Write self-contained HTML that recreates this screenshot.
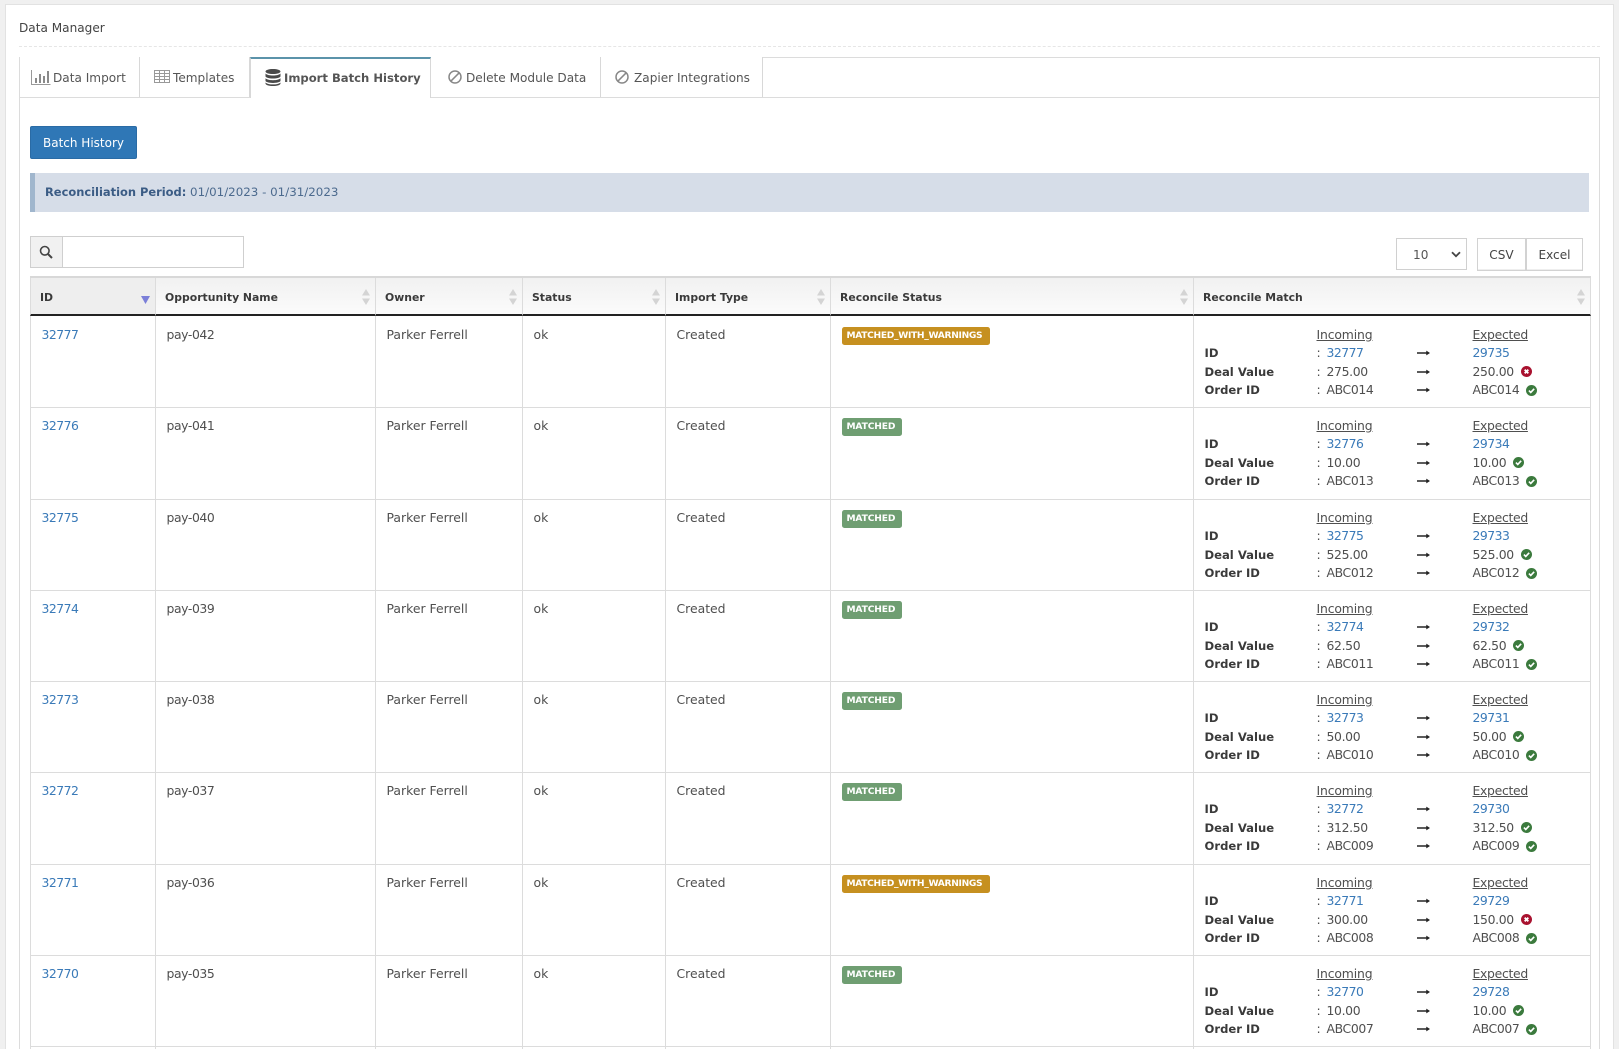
<!DOCTYPE html>
<html><head><meta charset="utf-8"><title>Data Manager</title>
<style>
*{box-sizing:border-box}
html,body{margin:0;padding:0;width:1619px;height:1049px;overflow:hidden;background:#f0f0f0}
body{font-family:"DejaVu Sans","Liberation Sans",sans-serif;font-size:12.4px;color:#4f4f4f;position:relative}
.panel{position:absolute;left:5px;top:4px;width:1609px;height:1100px;background:#fff;border:1px solid #e2e2e2}
.abs{position:absolute}
h1{position:absolute;left:19px;top:20px;margin:0;font-weight:400;font-size:12.1px;line-height:16px;color:#444;white-space:nowrap}
.dash{position:absolute;left:19px;top:46px;width:1581px;border-top:1px dashed #e6e6e6}
.box{position:absolute;left:19px;top:57px;width:1581px;height:1100px;border:1px solid #dcdcdc}
.tabline{position:absolute;left:19px;top:97px;width:1581px;border-top:1px solid #dcdcdc}
.tab{position:absolute;top:57px;height:40px;border-right:1px solid #d8d8d8;background:#fff;line-height:42px;white-space:nowrap;font-size:12.1px;color:#555}
.tab svg{position:absolute}
.tab span{position:absolute;top:0}
.tab.on{border-top:2px solid #5b93aa;border-left:1px solid #d8d8d8;border-bottom:0;height:41px;line-height:38px;font-weight:700;font-size:11.6px;color:#555}
.btn{position:absolute;left:30px;top:126px;width:107px;height:33px;background:#2f77b6;border:1px solid #2a6ba5;border-radius:2px;color:#fff;text-align:center;line-height:32.5px;font-size:12px}
.alert{position:absolute;left:30px;top:173px;width:1559px;height:39px;background:#d6dde8;border-left:5px solid #a0b6cd;line-height:39px;padding-left:10px;color:#4c6a8e;font-size:11.85px;white-space:nowrap}
.alert b{color:#3b5c85;font-size:11.45px}
.search{position:absolute;left:30px;top:236px;width:214px;height:32px;border:1px solid #cfcfcf;background:#fff}
.search i{position:absolute;left:0;top:0;width:32px;height:30px;background:#f1f1f1;border-right:1px solid #cfcfcf}
.select{position:absolute;left:1396px;top:238px;width:71px;height:32px;border:1px solid #d0d0d0;background:#fff;line-height:32px;padding-left:16px;font-size:12.1px;color:#555}
.tbtn{position:absolute;top:238px;height:33px;border:1px solid #d2d2d2;background:#fff;text-align:center;line-height:33px;font-size:12.1px;color:#444;box-shadow:inset 0 -1px 0 #eee}
table{position:absolute;left:30px;top:276px;width:1561px;border-collapse:separate;border-spacing:0;table-layout:fixed;border-top:2px solid #d8d8d8}
th{height:38px;padding:4px 0 0 9px;text-align:left;font-size:10.85px;font-weight:700;color:#3a3a3a;background:linear-gradient(#f1f1f1,#fbfbfb);border-left:1px solid #dcdcdc;border-bottom:2px solid #222;position:relative;line-height:32px;white-space:nowrap}
th.s{background:#eeeeee}
th svg{position:absolute;right:5px;top:11px}
td{padding:9px 0 0 10.5px;vertical-align:top;border-left:1px solid #dcdcdc;border-bottom:1px solid #dcdcdc;line-height:18px;white-space:nowrap;overflow:hidden}
.first td{padding-top:10px}
.h92 td{height:92px}
.h91 td{height:91px}
td:nth-child(2){letter-spacing:-.4px}
td:last-child,th:last-child{border-right:1px solid #dcdcdc}
a{color:#3a7ab8;text-decoration:none;letter-spacing:-.5px}
.badge{display:inline-block;height:18px;border-radius:2.5px;padding:0 5px;color:#fff;font-weight:700;font-size:9.15px;line-height:18px;margin-top:1px;vertical-align:top}
.w{background:#c69020;width:148px;letter-spacing:-.33px}
.g{background:#6f9e72;width:60px;letter-spacing:-.15px}
.m{display:grid;grid-template-columns:112px 10px 90px 56px 1fr;grid-auto-rows:18.4px;line-height:18.4px;margin-top:0}
.m b{color:#3a3a3a;font-size:11.6px}
.m u{letter-spacing:-.3px}
.m u.i{grid-column:2/4;letter-spacing:-.15px}
.m svg.ar{margin-top:5px;display:block}
.m svg.ic{margin-left:7px;vertical-align:-1.5px}
.n{letter-spacing:-.35px}
</style></head><body>
<svg width="0" height="0" style="position:absolute">
<defs>
<symbol id="ok" viewBox="0 0 12 12"><circle cx="6" cy="6" r="6" fill="#3b7a3d"/><path d="M3.2 6.1 5.2 8.1 8.9 4.2" fill="none" stroke="#fff" stroke-width="1.8"/></symbol>
<symbol id="no" viewBox="0 0 12 12"><circle cx="6" cy="6" r="6" fill="#a9122f"/><path d="M4 4 8 8M8 4 4 8" fill="none" stroke="#fff" stroke-width="2"/></symbol>
<symbol id="ar" viewBox="0 0 14 8"><path d="M0 3.2H10.500V4.800H0Z" fill="#222"/><path d="M10 1.500 14 4 10 6.500Z" fill="#222"/></symbol>
<symbol id="so" viewBox="0 0 10 16"><path d="M5 0 9 6.500H1ZM5 16 1 9.500H9Z" fill="#d4d4d4"/></symbol>
</defs>
</svg>
<div class="panel"></div>
<h1>Data Manager</h1>
<div class="dash"></div>
<div class="box"></div>
<div class="tabline"></div>

<div class="tab" style="left:20px;width:120px">
<svg width="20" height="16" viewBox="0 0 20 16" style="left:11px;top:12px"><path d="M.5 1V15.500H19.500" fill="none" stroke="#999" stroke-width="1"/><path d="M4 9H6V14H4ZM8 5H10V14H8ZM12 7H14V14H12ZM16 2H18V14H16Z" fill="#8a8a8a"/></svg>
<span style="left:33px">Data Import</span></div>
<div class="tab" style="left:140px;width:110px">
<svg width="16" height="13" viewBox="0 0 16 13" style="left:14px;top:13px"><path d="M.5.500H15.500V12.500H.5ZM.5 3.500H15.500M.5 6.500H15.500M.5 9.500H15.500M5.500.500V12.500M10.500.500V12.500" fill="none" stroke="#999"/></svg>
<span style="left:33px">Templates</span></div>
<div class="tab on" style="left:250px;width:181px">
<svg width="16" height="17" viewBox="0 0 16 17" style="left:14px;top:10px"><path d="M8 0C12 0 15.500 1 15.500 2.500S12 5 8 5 .5 4 .5 2.500 4 0 8 0ZM.5 4.500C2 6 5 6.500 8 6.500S14 6 15.500 4.500V7.200C15.500 8.500 12 9.500 8 9.500S.5 8.500.5 7.200ZM.5 9.300C2 10.800 5 11.200 8 11.200S14 10.800 15.500 9.300V11.800C15.500 13 12 14 8 14S.5 13 .5 11.800ZM.5 13.500C2 15 5 15.400 8 15.400S14 15 15.500 13.500V14.500C15.500 16 12 17 8 17S.5 16 .5 14.500Z" fill="#4a4a4a"/></svg>
<span style="left:33px">Import Batch History</span></div>
<div class="tab" style="left:431px;width:170px">
<svg width="14" height="14" viewBox="0 0 14 14" style="left:17px;top:13px"><circle cx="7" cy="7" r="6" fill="none" stroke="#888" stroke-width="1.500"/><path d="M2.800 11.200 11.200 2.800" stroke="#888" stroke-width="1.500"/></svg>
<span style="left:35px">Delete Module Data</span></div>
<div class="tab" style="left:601px;width:162px">
<svg width="14" height="14" viewBox="0 0 14 14" style="left:14px;top:13px"><circle cx="7" cy="7" r="6" fill="none" stroke="#888" stroke-width="1.500"/><path d="M2.800 11.200 11.200 2.800" stroke="#888" stroke-width="1.500"/></svg>
<span style="left:33px">Zapier Integrations</span></div>

<div class="btn">Batch History</div>
<div class="alert"><b>Reconciliation Period:</b> 01/01/2023 - 01/31/2023</div>
<div class="search"><i><svg width="14" height="14" viewBox="0 0 14 14" style="position:absolute;left:8px;top:8px"><circle cx="5.800" cy="5.800" r="4.300" fill="none" stroke="#444" stroke-width="1.600"/><path d="M9 9 13 13" stroke="#444" stroke-width="2"/></svg></i></div>
<div class="select">10<svg width="10" height="7" viewBox="0 0 10 7" style="position:absolute;right:5px;top:12px"><path d="M1 1.200 5 5.200 9 1.200" fill="none" stroke="#444" stroke-width="1.800"/></svg></div>
<div class="tbtn" style="left:1477px;width:49px">CSV</div>
<div class="tbtn" style="left:1526px;width:57px">Excel</div>

<table>
<colgroup><col style="width:125px"><col style="width:220px"><col style="width:147px"><col style="width:143px"><col style="width:165px"><col style="width:363px"><col></colgroup>
<thead><tr>
<th class="s">ID<svg width="9" height="8" viewBox="0 0 9 8" style="right:5px;top:18px"><path d="M0 0H9L4.500 8Z" fill="#7b7fd8"/></svg></th>
<th>Opportunity Name<svg width="10" height="16" style="right:4px"><use href="#so"/></svg></th>
<th>Owner<svg width="10" height="16" style="right:4px"><use href="#so"/></svg></th>
<th>Status<svg width="10" height="16" style="right:4px"><use href="#so"/></svg></th>
<th>Import Type<svg width="10" height="16" style="right:4px"><use href="#so"/></svg></th>
<th>Reconcile Status<svg width="10" height="16" style="right:4px"><use href="#so"/></svg></th>
<th>Reconcile Match<svg width="10" height="16" style="right:4px"><use href="#so"/></svg></th>
</tr></thead>
<tbody>
<tr class="h92 first"><td><a href="#">32777</a></td><td>pay-042</td><td>Parker Ferrell</td><td>ok</td><td>Created</td><td><span class="badge w">MATCHED_WITH_WARNINGS</span></td><td><div class="m"><span></span><u class="i">Incoming</u><span></span><u>Expected</u><b>ID</b><span>:</span><a href="#">32777</a><svg class="ar" width="13" height="8"><use href="#ar"/></svg><a href="#">29735</a><b>Deal Value</b><span>:</span><span class="n">275.00</span><svg class="ar" width="13" height="8"><use href="#ar"/></svg><span class="n">250.00<svg class="ic" width="11" height="11"><use href="#no"/></svg></span><b>Order ID</b><span>:</span><span class="n">ABC014</span><svg class="ar" width="13" height="8"><use href="#ar"/></svg><span class="n">ABC014<svg class="ic" width="11" height="11"><use href="#ok"/></svg></span></div></td></tr>
<tr class="h92"><td><a href="#">32776</a></td><td>pay-041</td><td>Parker Ferrell</td><td>ok</td><td>Created</td><td><span class="badge g">MATCHED</span></td><td><div class="m"><span></span><u class="i">Incoming</u><span></span><u>Expected</u><b>ID</b><span>:</span><a href="#">32776</a><svg class="ar" width="13" height="8"><use href="#ar"/></svg><a href="#">29734</a><b>Deal Value</b><span>:</span><span class="n">10.00</span><svg class="ar" width="13" height="8"><use href="#ar"/></svg><span class="n">10.00<svg class="ic" width="11" height="11"><use href="#ok"/></svg></span><b>Order ID</b><span>:</span><span class="n">ABC013</span><svg class="ar" width="13" height="8"><use href="#ar"/></svg><span class="n">ABC013<svg class="ic" width="11" height="11"><use href="#ok"/></svg></span></div></td></tr>
<tr class="h91"><td><a href="#">32775</a></td><td>pay-040</td><td>Parker Ferrell</td><td>ok</td><td>Created</td><td><span class="badge g">MATCHED</span></td><td><div class="m"><span></span><u class="i">Incoming</u><span></span><u>Expected</u><b>ID</b><span>:</span><a href="#">32775</a><svg class="ar" width="13" height="8"><use href="#ar"/></svg><a href="#">29733</a><b>Deal Value</b><span>:</span><span class="n">525.00</span><svg class="ar" width="13" height="8"><use href="#ar"/></svg><span class="n">525.00<svg class="ic" width="11" height="11"><use href="#ok"/></svg></span><b>Order ID</b><span>:</span><span class="n">ABC012</span><svg class="ar" width="13" height="8"><use href="#ar"/></svg><span class="n">ABC012<svg class="ic" width="11" height="11"><use href="#ok"/></svg></span></div></td></tr>
<tr class="h91"><td><a href="#">32774</a></td><td>pay-039</td><td>Parker Ferrell</td><td>ok</td><td>Created</td><td><span class="badge g">MATCHED</span></td><td><div class="m"><span></span><u class="i">Incoming</u><span></span><u>Expected</u><b>ID</b><span>:</span><a href="#">32774</a><svg class="ar" width="13" height="8"><use href="#ar"/></svg><a href="#">29732</a><b>Deal Value</b><span>:</span><span class="n">62.50</span><svg class="ar" width="13" height="8"><use href="#ar"/></svg><span class="n">62.50<svg class="ic" width="11" height="11"><use href="#ok"/></svg></span><b>Order ID</b><span>:</span><span class="n">ABC011</span><svg class="ar" width="13" height="8"><use href="#ar"/></svg><span class="n">ABC011<svg class="ic" width="11" height="11"><use href="#ok"/></svg></span></div></td></tr>
<tr class="h91"><td><a href="#">32773</a></td><td>pay-038</td><td>Parker Ferrell</td><td>ok</td><td>Created</td><td><span class="badge g">MATCHED</span></td><td><div class="m"><span></span><u class="i">Incoming</u><span></span><u>Expected</u><b>ID</b><span>:</span><a href="#">32773</a><svg class="ar" width="13" height="8"><use href="#ar"/></svg><a href="#">29731</a><b>Deal Value</b><span>:</span><span class="n">50.00</span><svg class="ar" width="13" height="8"><use href="#ar"/></svg><span class="n">50.00<svg class="ic" width="11" height="11"><use href="#ok"/></svg></span><b>Order ID</b><span>:</span><span class="n">ABC010</span><svg class="ar" width="13" height="8"><use href="#ar"/></svg><span class="n">ABC010<svg class="ic" width="11" height="11"><use href="#ok"/></svg></span></div></td></tr>
<tr class="h92"><td><a href="#">32772</a></td><td>pay-037</td><td>Parker Ferrell</td><td>ok</td><td>Created</td><td><span class="badge g">MATCHED</span></td><td><div class="m"><span></span><u class="i">Incoming</u><span></span><u>Expected</u><b>ID</b><span>:</span><a href="#">32772</a><svg class="ar" width="13" height="8"><use href="#ar"/></svg><a href="#">29730</a><b>Deal Value</b><span>:</span><span class="n">312.50</span><svg class="ar" width="13" height="8"><use href="#ar"/></svg><span class="n">312.50<svg class="ic" width="11" height="11"><use href="#ok"/></svg></span><b>Order ID</b><span>:</span><span class="n">ABC009</span><svg class="ar" width="13" height="8"><use href="#ar"/></svg><span class="n">ABC009<svg class="ic" width="11" height="11"><use href="#ok"/></svg></span></div></td></tr>
<tr class="h91"><td><a href="#">32771</a></td><td>pay-036</td><td>Parker Ferrell</td><td>ok</td><td>Created</td><td><span class="badge w">MATCHED_WITH_WARNINGS</span></td><td><div class="m"><span></span><u class="i">Incoming</u><span></span><u>Expected</u><b>ID</b><span>:</span><a href="#">32771</a><svg class="ar" width="13" height="8"><use href="#ar"/></svg><a href="#">29729</a><b>Deal Value</b><span>:</span><span class="n">300.00</span><svg class="ar" width="13" height="8"><use href="#ar"/></svg><span class="n">150.00<svg class="ic" width="11" height="11"><use href="#no"/></svg></span><b>Order ID</b><span>:</span><span class="n">ABC008</span><svg class="ar" width="13" height="8"><use href="#ar"/></svg><span class="n">ABC008<svg class="ic" width="11" height="11"><use href="#ok"/></svg></span></div></td></tr>
<tr class="h91"><td><a href="#">32770</a></td><td>pay-035</td><td>Parker Ferrell</td><td>ok</td><td>Created</td><td><span class="badge g">MATCHED</span></td><td><div class="m"><span></span><u class="i">Incoming</u><span></span><u>Expected</u><b>ID</b><span>:</span><a href="#">32770</a><svg class="ar" width="13" height="8"><use href="#ar"/></svg><a href="#">29728</a><b>Deal Value</b><span>:</span><span class="n">10.00</span><svg class="ar" width="13" height="8"><use href="#ar"/></svg><span class="n">10.00<svg class="ic" width="11" height="11"><use href="#ok"/></svg></span><b>Order ID</b><span>:</span><span class="n">ABC007</span><svg class="ar" width="13" height="8"><use href="#ar"/></svg><span class="n">ABC007<svg class="ic" width="11" height="11"><use href="#ok"/></svg></span></div></td></tr>
<tr class="h91"><td></td><td></td><td></td><td></td><td></td><td></td><td></td></tr>
</tbody>
</table>
</body></html>
